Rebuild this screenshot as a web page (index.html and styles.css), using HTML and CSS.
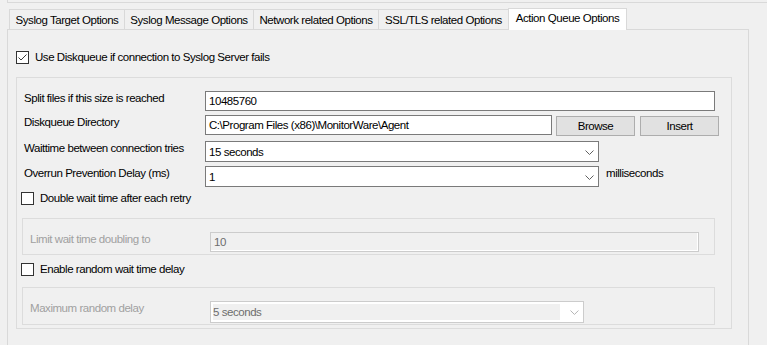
FILE: index.html
```html
<!DOCTYPE html>
<html lang="en">
<head>
    <meta charset="UTF-8">
    <title>Action Queue Options</title>
    <link rel="stylesheet" href="styles.css">
</head>
<body>

    <div class="frame-top"></div>

    <div class="tabs">
        <div class="tab tab-target">Syslog Target Options</div>
        <div class="tab tab-message">Syslog Message Options</div>
        <div class="tab tab-network">Network related Options</div>
        <div class="tab tab-ssl">SSL/TLS related Options</div>
        <div class="tab tab-queue active">Action Queue Options</div>
    </div>

    <div class="panel">
        <label class="check check-main">
            <span class="box">
                <svg width="11" height="11" viewBox="0 0 11 11"><polyline points="1.5,5.5 4,8 9.5,2.5" fill="none" stroke="#3c3c3c" stroke-width="1"/></svg>
            </span>
            Use Diskqueue if connection to Syslog Server fails
        </label>

        <div class="group main-group">
            <div class="row row-split">
                <span class="lbl">Split files if this size is reached</span>
                <div class="field field-size">10485760</div>
            </div>
            <div class="row row-dir">
                <span class="lbl">Diskqueue Directory</span>
                <div class="field field-dir">C:\Program Files (x86)\MonitorWare\Agent</div>
                <button class="btn btn-browse">Browse</button>
                <button class="btn btn-insert">Insert</button>
            </div>
            <div class="row row-wait">
                <span class="lbl">Waittime between connection tries</span>
                <div class="combo">
                    <span class="combo-text">15 seconds</span>
                    <svg class="chev" width="9" height="5" viewBox="0 0 9 5"><polyline points="0.5,0.5 4.5,4.5 8.5,0.5" fill="none" stroke="#606060" stroke-width="1"/></svg>
                </div>
            </div>
            <div class="row row-overrun">
                <span class="lbl">Overrun Prevention Delay (ms)</span>
                <div class="combo">
                    <span class="combo-text">1</span>
                    <svg class="chev" width="9" height="5" viewBox="0 0 9 5"><polyline points="0.5,0.5 4.5,4.5 8.5,0.5" fill="none" stroke="#606060" stroke-width="1"/></svg>
                </div>
                <span class="unit">milliseconds</span>
            </div>

            <label class="check check-sub check-double">
                <span class="box"></span>
                Double wait time after each retry
            </label>

            <div class="group sub-group sub-limit">
                <div class="row">
                    <span class="lbl lbl-sub disabled">Limit wait time doubling to</span>
                    <div class="field field-off">10</div>
                </div>
            </div>

            <label class="check check-sub check-random">
                <span class="box"></span>
                Enable random wait time delay
            </label>

            <div class="group sub-group sub-random">
                <div class="row">
                    <span class="lbl lbl-sub disabled">Maximum random delay</span>
                    <div class="combo combo-off">
                        <span class="combo-inner">5 seconds</span>
                        <svg class="chev" width="9" height="5" viewBox="0 0 9 5"><polyline points="0.5,0.5 4.5,4.5 8.5,0.5" fill="none" stroke="#b4b4b4" stroke-width="1"/></svg>
                    </div>
                </div>
            </div>
        </div>
    </div>

</body>
</html>
```

FILE: styles.css
```css
body {
    margin: 0;
    background-color: #f0f0f0;
    font-family: "Liberation Sans", Arial, sans-serif;
    font-size: 11.5px;
    letter-spacing: -0.45px;
    color: #000;
    overflow: hidden;
    height: 345px;
}

.frame-top {
    margin-left: 7px;
    height: 2px;
    border-left: 1px solid #d9d9d9;
    border-bottom: 1px solid #d9d9d9;
}

/* tab strip */
.tabs {
    display: flex;
    align-items: flex-end;
    padding-left: 9px;
    margin-top: 5px;
    height: 21px;
}

.tab {
    box-sizing: border-box;
    height: 20px;
    padding-top: 1px;
    line-height: 18px;
    text-align: center;
    border: 1px solid #d9d9d9;
    border-bottom: none;
    margin-left: -1px;
    white-space: nowrap;
}

.tab-target { width: 116px; margin-left: 0; }
.tab-message { width: 130px; }
.tab-network { width: 126px; }
.tab-ssl { width: 131px; }
.tab-queue { width: 119px; }

.tab.active {
    position: relative;
    height: 22px;
    margin-bottom: -1px;
    padding-top: 0;
    background-color: #fff;
}

.panel {
    box-sizing: border-box;
    margin-left: 7px;
    width: 742px;
    height: 330px;
    border: 1px solid #d9d9d9;
}

/* checkboxes */
.check {
    display: flex;
    align-items: center;
    gap: 6px;
    height: 13px;
    line-height: 13px;
    white-space: nowrap;
}

.box {
    box-sizing: border-box;
    width: 13px;
    height: 13px;
    border: 1px solid #333;
    background-color: #fff;
    display: flex;
}

.check-main {
    margin: 21px 0 0 8px;
}

.check-sub {
    margin-left: -3px;
}

.check-double { margin-top: 5px; }
.check-random { margin-top: 8px; }

/* group boxes */
.group {
    box-sizing: border-box;
    border: 1px solid #dcdcdc;
}

.main-group {
    margin: 13px 0 0 8px;
    width: 716px;
    height: 252px;
    padding: 13px 0 0 7px;
}

.sub-group {
    margin-left: -2px;
    width: 693px;
    padding: 13px 0 0 7px;
}

.sub-limit {
    margin-top: 13px;
    height: 37px;
}

.sub-random {
    margin-top: 11px;
    height: 38px;
}

/* form rows */
.row {
    display: flex;
    align-items: flex-start;
}

.row-dir { margin-top: 4px; }
.row-wait { margin-top: 5px; }
.row-overrun { margin-top: 4px; }

.lbl {
    width: 181px;
    line-height: 14px;
    white-space: nowrap;
}

.lbl-sub {
    width: 180px;
}

.disabled {
    color: #a0a0a0;
}

.unit {
    margin-left: 7px;
    line-height: 14px;
}

.field {
    box-sizing: border-box;
    height: 20px;
    line-height: 18px;
    padding-left: 3px;
    background-color: #fff;
    border: 1px solid #7a7a7a;
    white-space: nowrap;
}

.field-size { width: 510px; }
.field-dir { width: 347px; }

.field-off {
    width: 489px;
    color: #6d6d6d;
    background-color: #f0f0f0;
    border-color: #cccccc;
    box-shadow: inset -1px -1px 0 #fff;
}

.btn {
    box-sizing: border-box;
    width: 79px;
    height: 20px;
    margin-top: 1px;
    padding: 0;
    font: inherit;
    letter-spacing: inherit;
    color: #000;
    background-color: #e1e1e1;
    border: 1px solid #adadad;
}

.btn-browse { margin-left: 4px; }
.btn-insert { margin-left: 5px; }

.combo {
    box-sizing: border-box;
    width: 394px;
    height: 21px;
    display: flex;
    align-items: center;
    background-color: #fff;
    border: 1px solid #7a7a7a;
    padding: 0 4px 0 3px;
}

.combo-text {
    flex: 1;
}

.chev {
    margin-top: 1px;
}

.combo-off {
    width: 374px;
    height: 22px;
    border-color: #cccccc;
    padding: 2px 4px 2px 2px;
    color: #6d6d6d;
}

.combo-inner {
    width: 351px;
    height: 16px;
    line-height: 16px;
    background-color: #f0f0f0;
    margin-right: 10px;
}
```
